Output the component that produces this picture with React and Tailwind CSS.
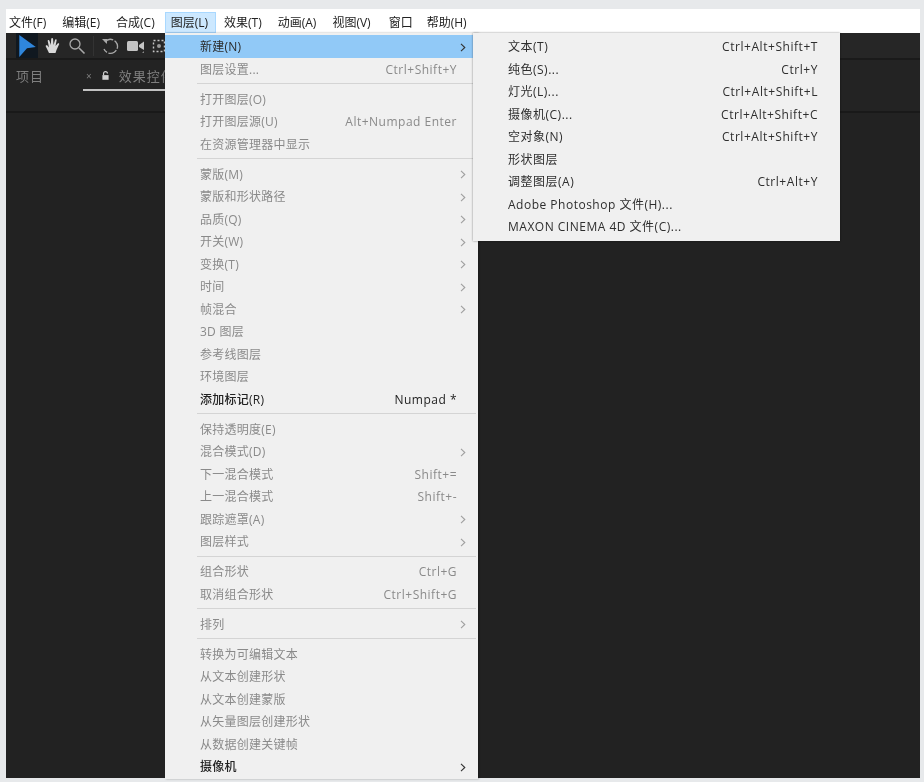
import React from "react";

const FONT = "[font-family:'Open_Sans','Noto_Sans_CJK_SC',sans-serif]";

const menuBar = [
  { t: "文件(F)", c: "" },
  { t: "编辑(E)", c: "" },
  { t: "合成(C)", c: "" },
  { t: "图层(L)", c: "" },
  { t: "效果(T)", c: "" },
  { t: "动画(A)", c: "" },
  { t: "视图(V)", c: "" },
  { t: "窗口", c: "ml-[2px]" },
  { t: "帮助(H)", c: "-ml-[2px]" },
];

const mainMenu = [
  { t: "新建(N)", on: true, sub: true, hi: true },
  { t: "图层设置...", k: "Ctrl+Shift+Y" },
  "-",
  { t: "打开图层(O)" },
  { t: "打开图层源(U)", k: "Alt+Numpad Enter" },
  { t: "在资源管理器中显示" },
  "-",
  { t: "蒙版(M)", sub: true },
  { t: "蒙版和形状路径", sub: true },
  { t: "品质(Q)", sub: true },
  { t: "开关(W)", sub: true },
  { t: "变换(T)", sub: true },
  { t: "时间", sub: true },
  { t: "帧混合", sub: true },
  { t: "3D 图层" },
  { t: "参考线图层" },
  { t: "环境图层" },
  { t: "添加标记(R)", k: "Numpad *", on: true },
  "-",
  { t: "保持透明度(E)" },
  { t: "混合模式(D)", sub: true },
  { t: "下一混合模式", k: "Shift+=" },
  { t: "上一混合模式", k: "Shift+-" },
  { t: "跟踪遮罩(A)", sub: true },
  { t: "图层样式", sub: true },
  "-",
  { t: "组合形状", k: "Ctrl+G" },
  { t: "取消组合形状", k: "Ctrl+Shift+G" },
  "-",
  { t: "排列", sub: true },
  "-",
  { t: "转换为可编辑文本" },
  { t: "从文本创建形状" },
  { t: "从文本创建蒙版" },
  { t: "从矢量图层创建形状" },
  { t: "从数据创建关键帧" },
  { t: "摄像机", on: true, sub: true },
];

const subMenu = [
  { t: "文本(T)", k: "Ctrl+Alt+Shift+T" },
  { t: "纯色(S)...", k: "Ctrl+Y" },
  { t: "灯光(L)...", k: "Ctrl+Alt+Shift+L" },
  { t: "摄像机(C)...", k: "Ctrl+Alt+Shift+C" },
  { t: "空对象(N)", k: "Ctrl+Alt+Shift+Y" },
  { t: "形状图层" },
  { t: "调整图层(A)", k: "Ctrl+Alt+Y" },
  { t: "Adobe Photoshop 文件(H)..." },
  { t: "MAXON CINEMA 4D 文件(C)..." },
];

function Chevron({ dark }) {
  return (
    <svg width="6" height="9" viewBox="0 0 6 9" className="shrink-0">
      <path d="M1 .8 4.8 4.5 1 8.2" fill="none" stroke={dark ? "#333" : "#a0a0a0"} strokeWidth="1.1" />
    </svg>
  );
}

function MainRow({ item }) {
  return (
    <div
      className={`flex h-[22.5px] items-center justify-between pl-[35px] pr-[12px] pt-[1.5px] text-[12px] ${
        item.hi ? "bg-[#91c9f7] text-[#2a2a2a]" : item.on ? "font-medium text-[#222222]" : "text-[#8a8a8a]"
      }`}
    >
      <span className="whitespace-pre tracking-[0.25px]">{item.t}</span>
      {item.sub ? <Chevron dark={item.on} /> : <span className="pr-[9px] tracking-[0.5px]">{item.k}</span>}
    </div>
  );
}

function Toolbar() {
  return (
    <div className="flex h-[27px] items-center border-b-2 border-[#1a1a1a] bg-[#262626] pl-[10px]">
      <div className="flex h-[25px] w-[22px] items-center justify-center bg-[#101820]">
        <svg width="18" height="22" viewBox="0 0 16 20">
          <path d="M1 0 16 11 8 12 1 20Z" fill="#2f86dc" />
        </svg>
      </div>
      <svg width="18" height="18" viewBox="0 0 18 18" className="ml-[6px]">
        <path d="M5 16 1.8 9.5c-.5-1.2 1-1.8 1.8-.8L5 10.5 3.7 4c-.2-1.3 1.500-1.500 1.800-.3L6.800 8 7.200 2c.1-1.300 1.800-1.300 1.900 0L9.500 8 11 3c.4-1.200 1.900-.8 1.600.5L11.500 9l2.200-2.500c.9-.9 2 0 1.300 1.100L12.500 13l-1 3Z" fill="#d8d8d8" />
      </svg>
      <svg width="18" height="18" viewBox="0 0 18 18" className="ml-[6px]">
        <circle cx="7" cy="7" r="5" fill="none" stroke="#a8a8a8" strokeWidth="1.300" />
        <path d="M11 11 16.500 16.500" stroke="#a8a8a8" strokeWidth="1.600" />
      </svg>
      <div className="ml-[7px] h-[20px] w-px bg-[#333333]" />
      <svg width="18" height="18" viewBox="0 0 18 18" className="ml-[7px]">
        <path d="M4 5a7 7 0 1 1-1 7" fill="none" stroke="#a8a8a8" strokeWidth="1.300" strokeDasharray="9 1.500" />
        <path d="M1 2h5v5Z" fill="#a8a8a8" />
      </svg>
      <svg width="20" height="16" viewBox="0 0 20 16" className="ml-[7px]">
        <rect x="1" y="3" width="11" height="10" rx="1.500" fill="#c4c4c4" />
        <path d="M13 7 18 3.500V12L13 9Z" fill="#c4c4c4" />
        <path d="M16 15h2v-2Z" fill="#888" />
      </svg>
      <svg width="14" height="16" viewBox="0 0 14 16" className="ml-[6px]">
        <rect x="1.500" y="2.500" width="11" height="11" fill="none" stroke="#c4c4c4" strokeWidth="1.400" strokeDasharray="2 2" />
        <circle cx="7" cy="8" r="2" fill="#999" />
      </svg>
    </div>
  );
}

function PanelTabs() {
  return (
    <div className="flex h-[53px] border-b-2 border-[#191919] bg-[#232323]">
      <span className="ml-[10px] mt-[6px] text-[13px] leading-[20px] tracking-[1px] text-[#7f7f7f]">项目</span>
      <div className="ml-[39px] flex h-[31px] w-[82px] items-start whitespace-nowrap border-b-2 border-[#c2c2c2] pl-[3px] pt-[6px] text-[13px] leading-[20px] tracking-[1px] text-[#7f7f7f]">
        <span className="mr-[9px] text-[10px]">×</span>
        <svg width="7" height="9" viewBox="0 0 9 11" className="mr-[10px] mt-[5px] shrink-0">
          <path d="M2 5V3a2.500 2.500 0 0 1 5 0" fill="none" stroke="#d0d0d0" strokeWidth="1.500" />
          <rect x="0.500" y="5" width="8" height="6" fill="#d0d0d0" />
        </svg>
        <span>效果控件</span>
      </div>
    </div>
  );
}

export default function App() {
  return (
    <div className={`relative h-[782px] w-[924px] overflow-hidden bg-[#e7e9eb] pt-[9px] ${FONT} blur-[0.35px]`}>
      <div className="mx-[6px] flex h-[769px] w-[914px] flex-col">
        <div className="flex h-[24px] items-center gap-[16px] bg-white pl-[3px] pt-[3px] text-[12px] text-[#222222]">
          {menuBar.map((m) =>
            m.t === "图层(L)" ? (
              <span key={m.t} className="-ml-[6px] -mr-[8px] flex h-[21px] items-center border border-[#a9d8ff] bg-[#cce8ff] pl-[5px] pr-[7px]">{m.t}</span>
            ) : (
              <span key={m.t} className={`whitespace-nowrap ${m.c}`}>{m.t}</span>
            )
          )}
        </div>
        <div className="flex-1 bg-[#222222]">
          <Toolbar />
          <PanelTabs />
        </div>
      </div>

      <div className="absolute left-[165px] top-[33px] h-[746px] w-[313px] bg-[#f0f0f0] pt-[2px] shadow-[1px_0_2px_rgba(0,0,0,0.3)]">
        {mainMenu.map((item, i) =>
          item === "-" ? (
            <div key={i} className="flex h-[7.5px] items-center pl-[32px] pr-[2px]">
              <div className="h-px w-full bg-[#d4d4d4]" />
            </div>
          ) : (
            <MainRow key={i} item={item} />
          )
        )}
      </div>

      <div className="absolute left-[473px] top-[33px] h-[208px] w-[367px] bg-[#f0f0f0] pt-[2px] shadow-[0_0_2px_rgba(0,0,0,0.45)]">
        {subMenu.map((item) => (
          <div key={item.t} className="flex h-[22.5px] items-center justify-between pl-[35px] pr-[22px] pt-[1.5px] text-[12px] text-[#2e2e2e]">
            <span className="whitespace-pre tracking-[0.5px]">{item.t}</span>
            {item.k && <span className="tracking-[0.55px]">{item.k}</span>}
          </div>
        ))}
      </div>
    </div>
  );
}
